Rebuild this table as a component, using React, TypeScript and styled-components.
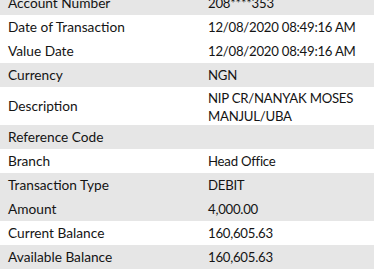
import React from "react";
import styled, { createGlobalStyle } from "styled-components";

const Global = createGlobalStyle`
  html, body { margin: 0; padding: 0; background: #ffffff; overflow: hidden; }
  body { font-family: Lato, "Open Sans", sans-serif; }
`;

const Table = styled.div`
  width: 374px;
  margin-top: -9px;
  display: flex;
  flex-direction: column;
`;

const Row = styled.div<{ $shaded: boolean }>`
  display: grid;
  grid-template-columns: 200px 174px;
  align-items: center;
  background: ${(p) => (p.$shaded ? "#e6e6e6" : "#ffffff")};
  color: #141414;
`;

const Label = styled.div`
  padding: 0 8px;
  font-size: 13.7px;
  line-height: 24px;
  white-space: nowrap;
`;

const Value = styled.div<{ $multi: boolean }>`
  padding: ${(p) => (p.$multi ? "2px 8px 0 8px" : "0 8px")};
  font-size: 13.2px;
  letter-spacing: -0.25px;
  line-height: ${(p) => (p.$multi ? "18px" : "24px")};
  min-height: 24px;
  white-space: ${(p) => (p.$multi ? "normal" : "nowrap")};
`;

const rows: { label: string; value: string; shaded: boolean; multi?: boolean }[] = [
  { label: "Account Number", value: "208****353", shaded: true },
  { label: "Date of Transaction", value: "12/08/2020 08:49:16 AM", shaded: false },
  { label: "Value Date", value: "12/08/2020 08:49:16 AM", shaded: false },
  { label: "Currency", value: "NGN", shaded: true },
  { label: "Description", value: "NIP CR/NANYAK MOSES MANJUL/UBA", shaded: false, multi: true },
  { label: "Reference Code", value: "", shaded: true },
  { label: "Branch", value: "Head Office", shaded: false },
  { label: "Transaction Type", value: "DEBIT", shaded: true },
  { label: "Amount", value: "4,000.00", shaded: true },
  { label: "Current Balance", value: "160,605.63", shaded: false },
  { label: "Available Balance", value: "160,605.63", shaded: true },
];

export default function App() {
  return (
    <>
      <Global />
      <Table>
        {rows.map((r) => (
          <Row key={r.label} $shaded={r.shaded}>
            <Label>{r.label}</Label>
            <Value $multi={!!r.multi}>{r.value}</Value>
          </Row>
        ))}
      </Table>
    </>
  );
}
